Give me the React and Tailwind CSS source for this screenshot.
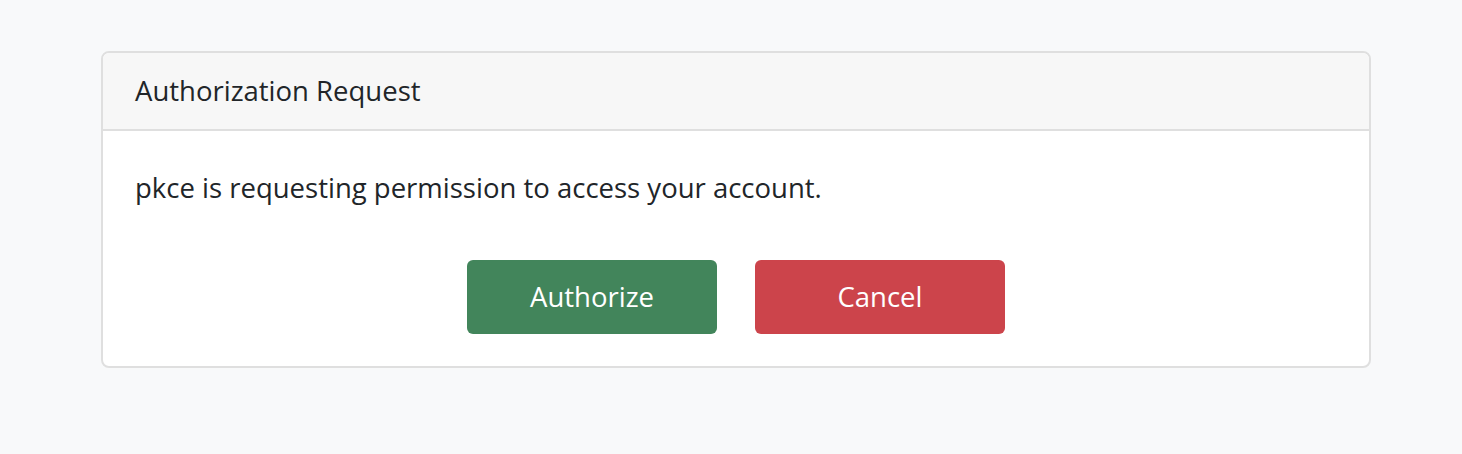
export default function App() {
  return (
    <div className="min-h-[454px] bg-[#f8f9fa] pt-[51px] pl-[101px] font-['Open_Sans','Noto_Sans',sans-serif] text-[#212529]">
      <div className="w-[1270px] rounded-[8px] border-2 border-[#dfdfdf] bg-white overflow-hidden">
        <div className="h-[78px] flex items-center px-[32px] bg-[#f7f7f7] border-b-2 border-[#dfdfdf]">
          <h1 className="text-[27.5px] leading-none">Authorization Request</h1>
        </div>
        <div className="px-[32px] pt-[43px] pb-[32px]">
          <p className="text-[27.5px] leading-none">pkce is requesting permission to access your account.</p>
          <div className="mt-[58px] flex justify-center gap-[38px]">
            <button className="w-[250px] h-[74px] rounded-[6px] bg-[#42855b] text-white text-[27.5px]">Authorize</button>
            <button className="w-[250px] h-[74px] rounded-[6px] bg-[#cc444b] text-white text-[27.5px]">Cancel</button>
          </div>
        </div>
      </div>
    </div>
  );
}
